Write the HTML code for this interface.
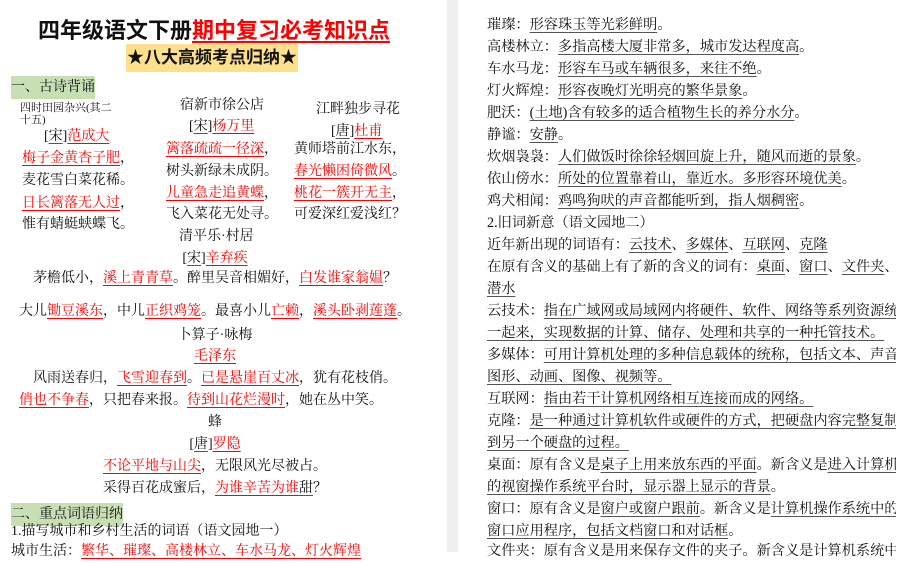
<!DOCTYPE html>
<html><head><meta charset="utf-8"><style>
*{margin:0;padding:0;box-sizing:border-box}
body{width:911px;height:552px;overflow:hidden;background:#fff;position:relative;font-family:"Liberation Serif","Noto Serif CJK SC",serif;color:#111}
.l{position:absolute;height:22px;line-height:22px;font-size:14px;white-space:nowrap}
.c{left:0;width:430px;text-align:center}
.r{color:#f00;text-decoration:underline;text-decoration-color:#f00;text-underline-offset:3px}
.u{text-decoration:underline;text-decoration-color:#555;text-underline-offset:3px}
.R{position:absolute;left:487px;width:409px;height:22px;line-height:22px;font-size:14.2px;white-space:nowrap;overflow:hidden}
.j{text-align:justify;text-align-last:justify}
#gap{position:absolute;left:447px;top:0;width:11px;height:552px;background:#efefef}
</style></head><body>
<div id="gap"></div>
<div class="l" style="left:38px;top:16px;height:30px;line-height:30px;font-size:22px;font-weight:bold;font-family:'Liberation Sans','Noto Sans CJK SC',sans-serif">四年级语文下册<span class="r" style="text-decoration-thickness:2px">期中复习必考知识点</span></div>
<div style="position:absolute;left:126px;top:44px;width:172px;height:28px;background:#fde08c;font-size:17px;font-weight:bold;line-height:28px;text-align:center;font-family:'Liberation Sans','Noto Sans CJK SC',sans-serif">★八大高频考点归纳★</div>
<div style="position:absolute;left:11px;top:76px;width:84px;height:23px;background:#c6e0b4;font-size:14px;line-height:23px">一、古诗背诵</div>
<div class="l" style="left:20px;top:102px;font-size:11px;line-height:12px;height:26px;white-space:normal;width:100px">四时田园杂兴(其二十五)</div>
<div class="l" style="left:44px;top:126px">[<span class="u">宋</span>]<span class="r">范成大</span></div>
<div class="l" style="left:22px;top:148px"><span class="r">梅子金黄杏子肥</span>，</div>
<div class="l" style="left:22px;top:170px">麦花雪白菜花稀。</div>
<div class="l" style="left:22px;top:193px"><span class="r">日长篱落无人过</span>，</div>
<div class="l" style="left:22px;top:214px">惟有蜻蜓蛱蝶飞。</div>
<div class="l" style="left:180px;top:95px">宿新市徐公店</div>
<div class="l" style="left:189px;top:116px">[<span class="u">宋</span>]<span class="r">杨万里</span></div>
<div class="l" style="left:166px;top:139px"><span class="r">篱落疏疏一径深</span>，</div>
<div class="l" style="left:166px;top:161px">树头新绿未成阴。</div>
<div class="l" style="left:166px;top:183px"><span class="r">儿童急走追黄蝶</span>，</div>
<div class="l" style="left:166px;top:204px">飞入菜花无处寻。</div>
<div class="l" style="left:179px;top:226px">清平乐·村居</div>
<div class="l" style="left:316px;top:99px">江畔独步寻花</div>
<div class="l" style="left:331px;top:121px">[<span class="u">唐</span>]<span class="r">杜甫</span></div>
<div class="l" style="left:294px;top:139px">黄师塔前江水东，</div>
<div class="l" style="left:294px;top:161px"><span class="r">春光懒困倚微风</span>。</div>
<div class="l" style="left:294px;top:183px"><span class="r">桃花一簇开无主</span>，</div>
<div class="l" style="left:294px;top:204px">可爱深红爱浅红？</div>
<div class="l c" style="top:248px">[<span class="u">宋</span>]<span class="r">辛弃疾</span></div>
<div class="l c" style="top:268px">茅檐低小，<span class="r">溪上青青草</span>。醉里吴音相媚好，<span class="r">白发谁家翁媪</span>？</div>
<div class="l c" style="top:301px">大儿<span class="r">锄豆溪东</span>，中儿<span class="r">正织鸡笼</span>。最喜小儿<span class="r">亡赖</span>，<span class="r">溪头卧剥莲蓬</span>。</div>
<div class="l c" style="top:325px">卜算子·咏梅</div>
<div class="l c" style="top:346px"><span class="r">毛泽东</span></div>
<div class="l c" style="top:368px">风雨送春归，<span class="r">飞雪迎春到</span>。<span class="r">已是悬崖百丈冰</span>，犹有花枝俏。</div>
<div class="l" style="left:19px;top:390px"><span class="r">俏也不争春</span>，只把春来报。<span class="r">待到山花烂漫时</span>，她在丛中笑。</div>
<div class="l c" style="top:412px">蜂</div>
<div class="l c" style="top:434px">[<span class="u">唐</span>]<span class="r">罗隐</span></div>
<div class="l c" style="top:456px"><span class="r">不论平地与山尖</span>，无限风光尽被占。</div>
<div class="l c" style="top:478px">采得百花成蜜后，<span class="r">为谁辛苦为谁</span><span class="u">甜</span>？</div>
<div style="position:absolute;left:11px;top:503px;width:112px;height:23px;background:#c6e0b4;font-size:14px;line-height:23px">二、重点词语归纳</div>
<div class="l" style="left:11px;top:521px">1.描写城市和乡村生活的词语（语文园地一）</div>
<div class="l" style="left:11px;top:541px">城市生活：<span class="r">繁华、璀璨、高楼林立、车水马龙、灯火辉煌</span></div>

<div class="R" style="top:14px">璀璨：<span class="u">形容珠玉等光彩鲜明</span>。</div>
<div class="R" style="top:36px">高楼林立：<span class="u">多指高楼大厦非常多，城市发达程度高</span>。</div>
<div class="R" style="top:58px">车水马龙：<span class="u">形容车马或车辆很多，来往不绝</span>。</div>
<div class="R" style="top:80px">灯火辉煌：<span class="u">形容夜晚灯光明亮的繁华景象</span>。</div>
<div class="R" style="top:102px">肥沃：<span class="u">(土地)含有较多的适合植物生长的养分水分</span>。</div>
<div class="R" style="top:124px">静谧：<span class="u">安静</span>。</div>
<div class="R" style="top:146px">炊烟袅袅：<span class="u">人们做饭时徐徐轻烟回旋上升，随风而逝的景象</span>。</div>
<div class="R" style="top:168px">依山傍水：<span class="u">所处的位置靠着山，靠近水。多形容环境优美</span>。</div>
<div class="R" style="top:190px">鸡犬相闻：<span class="u">鸡鸣狗吠的声音都能听到，指人烟稠密</span>。</div>
<div class="R" style="top:212px">2.旧词新意（语文园地二）</div>
<div class="R" style="top:234px">近年新出现的词语有：<span class="u">云技术</span>、<span class="u">多媒体</span>、<span class="u">互联网</span>、<span class="u">克隆</span></div>
<div class="R j" style="top:256px">在原有含义的基础上有了新的含义的词有：<span class="u">桌面</span>、<span class="u">窗口</span>、<span class="u">文件夹</span>、</div>
<div class="R" style="top:278px"><span class="u">潜水</span></div>
<div class="R j" style="top:300px">云技术：<span class="u">指在广域网或局域网内将硬件、软件、网络等系列资源统</span></div>
<div class="R" style="top:322px"><span class="u">一起来，实现数据的计算、储存、处理和共享的一种托管技术。</span></div>
<div class="R j" style="top:344px">多媒体：<span class="u">可用计算机处理的多种信息载体的统称，包括文本、声音、</span></div>
<div class="R" style="top:366px"><span class="u">图形、动画、图像、视频等。</span></div>
<div class="R" style="top:388px">互联网：<span class="u">指由若干计算机网络相互连接而成的网络。</span></div>
<div class="R j" style="top:410px">克隆：<span class="u">是一种通过计算机软件或硬件的方式，把硬盘内容完整复制</span></div>
<div class="R" style="top:432px"><span class="u">到另一个硬盘的过程。</span></div>
<div class="R j" style="top:454px">桌面：原有含义是<span class="u">桌子上用来放东西的平面</span>。新含义是<span class="u">进入计算机</span></div>
<div class="R" style="top:476px"><span class="u">的视窗操作系统平台时，显示器上显示的背景</span>。</div>
<div class="R j" style="top:498px">窗口：原有含义是<span class="u">窗户或窗户跟前</span>。新含义是<span class="u">计算机操作系统中的</span></div>
<div class="R" style="top:520px"><span class="u">窗口应用程序，包括文档窗口和对话框</span>。</div>
<div class="R j" style="top:540px">文件夹：原有含义是用来保存文件的夹子。新含义是计算机系统中</div>
</body></html>
